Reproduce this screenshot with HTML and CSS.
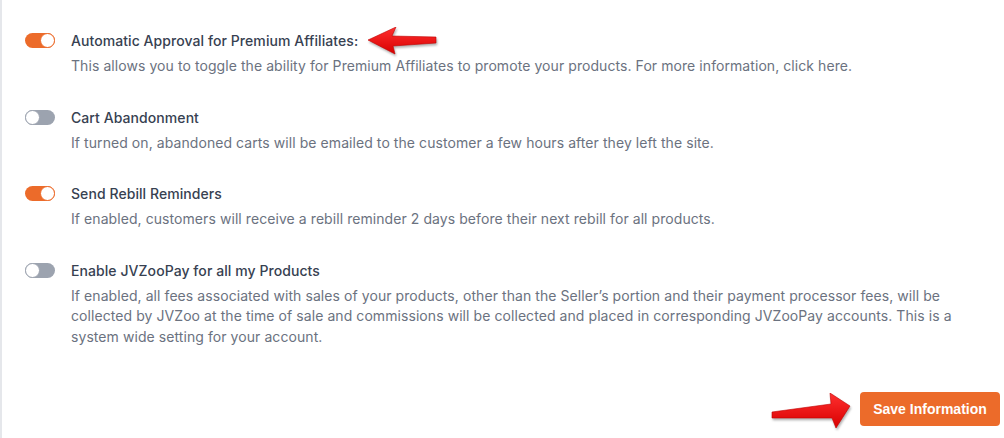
FILE: index.html
```html
<!DOCTYPE html>
<html lang="en">
   <head>
      <meta charset="UTF-8">
      <meta name="viewport" content="width=device-width, initial-scale=1.0">
      <title>Account Settings</title>
      <link rel="stylesheet" href="styles.css">
   </head>
   <body>
      <div class="panel">
         <div class="setting">
            <span class="toggle on"><span class="knob"></span></span>
            <div class="setting-text">
               <div class="setting-title">Automatic Approval for Premium Affiliates:</div>
               <p class="setting-desc">This allows you to toggle the ability for Premium Affiliates to promote your products. For more information, click here.</p>
            </div>
         </div>
         <div class="setting">
            <span class="toggle"><span class="knob"></span></span>
            <div class="setting-text">
               <div class="setting-title">Cart Abandonment</div>
               <p class="setting-desc">If turned on, abandoned carts will be emailed to the customer a few hours after they left the site.</p>
            </div>
         </div>
         <div class="setting">
            <span class="toggle on"><span class="knob"></span></span>
            <div class="setting-text">
               <div class="setting-title">Send Rebill Reminders</div>
               <p class="setting-desc">If enabled, customers will receive a rebill reminder 2 days before their next rebill for all products.</p>
            </div>
         </div>
         <div class="setting">
            <span class="toggle"><span class="knob"></span></span>
            <div class="setting-text">
               <div class="setting-title">Enable JVZooPay for all my Products</div>
               <p class="setting-desc">If enabled, all fees associated with sales of your products, other than the Seller’s portion and their payment processor fees, will be collected by JVZoo at the time of sale and commissions will be collected and placed in corresponding JVZooPay accounts. This is a system wide setting for your account.</p>
            </div>
         </div>
         <div class="actions">
            <button class="save-btn">Save Information</button>
         </div>
      </div>

      <!-- annotation arrows -->
      <svg class="arrow arrow-left" width="72" height="28" viewBox="0 0 72 28">
         <defs>
            <linearGradient id="redA" x1="0" y1="0" x2="0" y2="1">
               <stop offset="0" stop-color="#ff3030"/>
               <stop offset="1" stop-color="#d80000"/>
            </linearGradient>
         </defs>
         <polygon points="2,13 30,0 26,9 70,10 70,16 27,19 29,27" fill="url(#redA)" stroke="#c00000" stroke-width="0.6"/>
      </svg>
      <svg class="arrow arrow-right" width="82" height="36" viewBox="0 0 82 36">
         <defs>
            <linearGradient id="redB" x1="0" y1="0" x2="0" y2="1">
               <stop offset="0" stop-color="#ff3030"/>
               <stop offset="1" stop-color="#d80000"/>
            </linearGradient>
         </defs>
         <polygon points="80,13 60,0 61,11 2,19 2,25 62,25 66,35" fill="url(#redB)" stroke="#c00000" stroke-width="0.6"/>
      </svg>
   </body>
</html>
```

FILE: styles.css
```css
body {
margin: 0;
padding: 0;
background-color: #ffffff;
font-family: Inter, "Noto Sans", Arial, sans-serif;
color: #374151;
}
.panel {
border-left: 2px solid #e5e7eb;
min-height: 438px;
box-sizing: border-box;
padding: 31px 4px 0 23px;
}
.setting {
display: flex;
gap: 16px;
margin-bottom: 31px;
}
.toggle {
flex: none;
width: 30px;
height: 15px;
margin-top: 2px;
border-radius: 8px;
background-color: #9ca3af;
position: relative;
box-sizing: border-box;
}
.toggle .knob {
position: absolute;
top: 0;
left: 0;
width: 15px;
height: 15px;
border-radius: 50%;
background-color: #ffffff;
border: 1px solid #9ca3af;
box-sizing: border-box;
}
.toggle.on {
background-color: #ec6b2a;
}
.toggle.on .knob {
left: 15px;
border-color: #ec6b2a;
}
.setting-text {
max-width: 900px;
letter-spacing: 0.07px;
}
.setting-title {
font-size: 14px;
font-weight: 500;
line-height: 20px;
color: #374151;
}
.setting-desc {
margin: 5px 0 0;
font-size: 14px;
line-height: 20.5px;
color: #6b7280;
}
.actions {
display: flex;
justify-content: flex-end;
margin-top: 45px;
}
.save-btn {
font-family: "Liberation Sans", Arial, sans-serif;
font-size: 14px;
font-weight: bold;
width: 140px;
height: 34px;
color: #ffffff;
background-color: #ec6b2a;
border: none;
border-radius: 4px;
cursor: pointer;
}
.save-btn:hover {
background-color: #d95d1f;
}
.arrow {
position: absolute;
filter: drop-shadow(1px 2px 1px rgba(0, 0, 0, 0.3));
}
.arrow-left {
left: 366px;
top: 27px;
}
.arrow-right {
left: 770px;
top: 393px;
}
```
